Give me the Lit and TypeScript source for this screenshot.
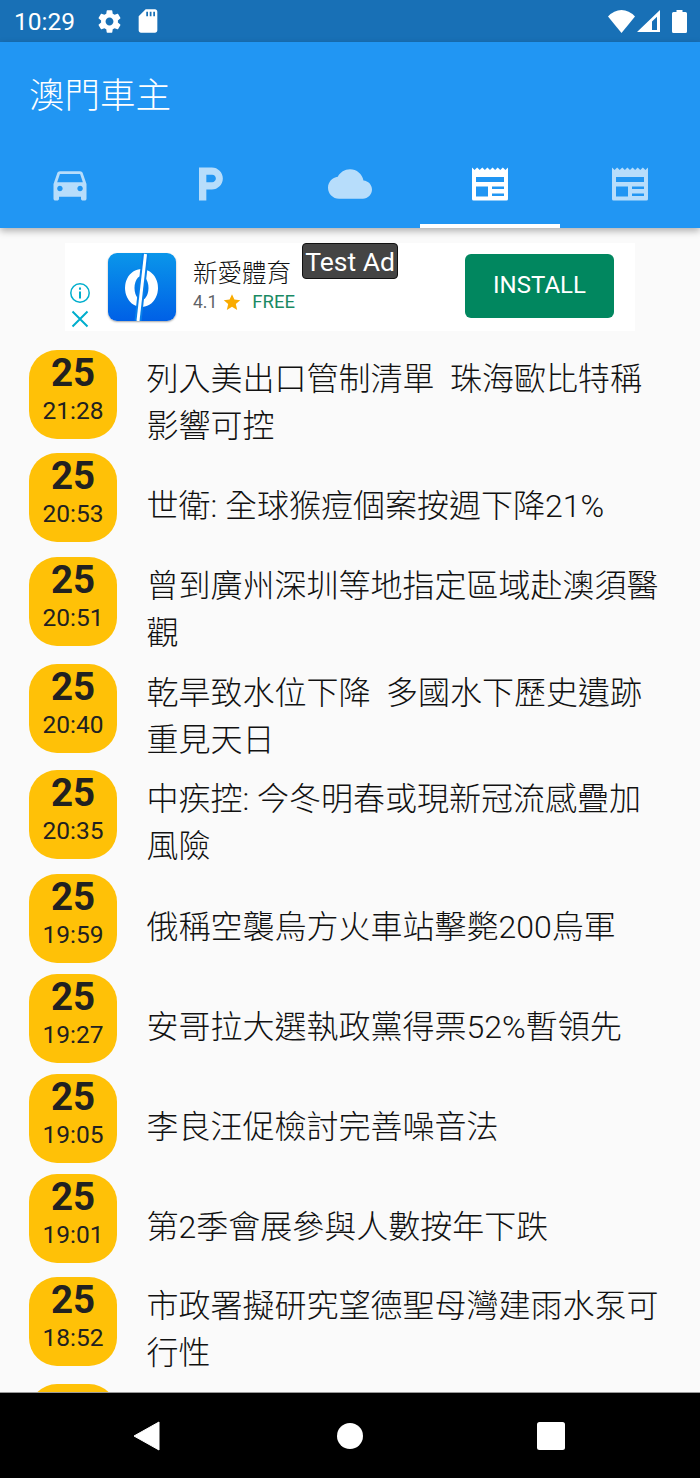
import { LitElement, html, css } from "lit";
import { customElement } from "lit/decorators.js";

const NEWS = "M4 5.500" + "l2.570 2.500 2.570-2.500".repeat(7) + "V37a1.500 1.500 0 0 1-1.500 1.500H5.500A1.500 1.500 0 0 1 4 37zM8 15v5h28v-5zM8 24.500v10h12v-10zM24 24.500V27h12v-2.500zM24 31.500V34h12v-2.500z";
const CAR = "M18.920 6.010C18.720 5.420 18.160 5 17.500 5h-11c-.66 0-1.210.42-1.420 1.010L3 12v8c0 .55.45 1 1 1h1c.55 0 1-.45 1-1v-1h12v1c0 .55.45 1 1 1h1c.55 0 1-.45 1-1v-8l-2.080-5.990zM6.500 16c-.83 0-1.500-.67-1.500-1.500S5.670 13 6.500 13s1.500.67 1.500 1.500S7.330 16 6.500 16zm11 0c-.83 0-1.500-.67-1.500-1.500s.67-1.500 1.500-1.500 1.500.67 1.500 1.500-.67 1.500-1.500 1.500zM5 11l1.500-4.500h11L19 11H5z";
const PARK = "M13 3H6v18h4v-6h3c3.310 0 6-2.690 6-6s-2.690-6-6-6zm.2 8H10V7h3.200c1.100 0 2 .9 2 2s-.9 2-2 2z";
const CLOUD = "M19.350 10.040C18.670 6.590 15.640 4 12 4 9.110 4 6.600 5.640 5.350 8.040 2.340 8.360 0 10.910 0 14c0 3.310 2.690 6 6 6h13c2.760 0 5-2.240 5-5 0-2.640-2.050-4.780-4.650-4.960z";

const tabs: [string, string][] = [[CAR, "0 0 24 24"], [PARK, "0 0 24 24"], [CLOUD, "0 0 24 24"], [NEWS, "0 0 44 44"], [NEWS, "0 0 44 44"]];
const rows: [string, string, number][] = [
  ["21:28", "列入美出口管制清單  珠海歐比特稱影響可控", 103],
  ["20:53", "世衛: 全球猴痘個案按週下降21%", 104],
  ["20:51", "曾到廣州深圳等地指定區域赴澳須醫觀", 107],
  ["20:40", "乾旱致水位下降  多國水下歷史遺跡重見天日", 106],
  ["20:35", "中疾控: 今冬明春或現新冠流感疊加風險", 104],
  ["19:59", "俄稱空襲烏方火車站擊斃200烏軍", 100],
  ["19:27", "安哥拉大選執政黨得票52%暫領先", 100],
  ["19:05", "李良汪促檢討完善噪音法", 100],
  ["19:01", "第2季會展參與人數按年下跌", 103],
  ["18:52", "市政署擬研究望德聖母灣建雨水泵可行性", 107],
  ["18:40", "", 100],
];

const icon = (d: string, cls = "", vb = "0 0 24 24") => html`<svg class=${cls} viewBox=${vb}><path d=${d} fill="currentColor" fill-rule="evenodd"></path></svg>`;

@customElement("app-root")
export class AppRoot extends LitElement {
  static styles = css`
    :host { display: block; width: 700px; height: 1478px; overflow: hidden; position: relative; background: #fafafa; font-family: Roboto, "Noto Sans CJK TC", sans-serif; color: #212121; }
    .status { height: 42px; background: #1870b6; color: #fff; display: flex; align-items: center; padding: 0 13px 0 14px; box-sizing: border-box; font: 24.500px Roboto, sans-serif; }
    .status .time { width: 82px; }
    .status svg { display: block; flex: none; }
    .gear { width: 27px; height: 27px; margin-right: 11px; }
    .sd { width: 28px; height: 28px; }
    .spacer { flex: 1; }
    .wifi { width: 27px; height: 23px; }
    .cell { width: 23px; height: 22px; margin-left: 2px; }
    .batt { width: 15px; height: 23px; margin-left: 12px; }
    .bar { height: 186px; background: #2196f3; box-shadow: 0 3px 7px rgba(0,0,0,.3); position: relative; z-index: 1; display: flex; flex-direction: column; }
    .title { height: 102px; padding: 32px 0 0 29px; box-sizing: border-box; color: #fff; font-size: 35.500px; line-height: 44px; font-weight: 300; }
    .tabs { display: flex; flex: 1; }
    .tab { width: 140px; display: flex; justify-content: center; padding-top: 17.500px; box-sizing: border-box; color: rgba(255,255,255,.68); position: relative; }
    .tab svg { width: 44px; height: 44px; }
    .tab.on { color: #fff; }
    .tab.on::after { content: ""; position: absolute; left: 0; right: 0; bottom: 0; height: 4px; background: #fff; }
    .ad { margin: 15px 65px 0; height: 88px; background: #fff; position: relative; display: flex; align-items: center; }
    .adside { width: 30px; padding-top: 37px; display: flex; flex-direction: column; align-items: center; gap: 4px; color: #00aecd; }
    .adside svg { width: 22px; height: 22px; display: block; }
    .logo { width: 68px; height: 68px; border-radius: 9px; margin: 0 0 0 13px; background: linear-gradient(#0a96ea, #0060e6); box-shadow: 0 1px 2px rgba(0,0,0,.35); flex: none; }
    .logo svg { display: block; width: 68px; height: 68px; }
    .adtext { margin-left: 17px; flex: 1; padding-bottom: 4px; }
    .adname { font-size: 24.500px; line-height: 36px; color: #111; font-weight: 300; }
    .admeta { font: 17.500px/24px Roboto, sans-serif; color: #5f6368; display: flex; align-items: center; margin-top: -2px; }
    .star { width: 18px; height: 18px; margin: 0 11px 0 6px; color: #f9ab00; }
    .free { color: #1a8a63; font-size: 18.500px; }
    .install { width: 149px; height: 64px; margin: 0 21px 3px 0; border-radius: 6px; background: #01875f; color: #fff; font: 24px/62px Roboto, sans-serif; text-align: center; }
    .testad { position: absolute; left: 237px; top: 0; width: 96px; height: 36px; box-sizing: border-box; border: 1px solid #111; border-radius: 4px; background: #444; color: #fff; font: 26.500px/35px Roboto, sans-serif; text-align: center; }
    .list { margin-top: 19px; padding-left: 29px; }
    .row { display: flex; align-items: flex-start; }
    .badge { width: 88px; height: 88.500px; border-radius: 28px; background: #ffc107; flex: none; text-align: center; font-family: Roboto, sans-serif; color: #212121; }
    .day { font-size: 38.500px; font-weight: 700; line-height: 44px; margin-top: 0.500px; }
    .hm { font-size: 24.500px; line-height: 32px; margin-top: 0.500px; }
    .text { margin-left: 29.500px; width: 520px; height: 88px; margin-top: 9px; font-size: 32px; line-height: 47px; white-space: pre-wrap; display: flex; align-items: center; color: #111; font-weight: 300; }
    .nav { position: absolute; left: 0; right: 0; bottom: 0; height: 86px; background: #000; border-top: 1px solid #999; box-sizing: border-box; display: flex; align-items: center; gap: 171px; padding-left: 130px; z-index: 2; }
    .nav svg { width: 32px; height: 32px; display: block; flex: none; }
  `;

  render() {
    return html`
      <div class="status">
        <span class="time">10:29</span>
        ${icon("M19.430 12.980c.04-.32.07-.64.07-.98s-.03-.66-.07-.98l2.110-1.650c.19-.15.24-.42.12-.64l-2-3.460c-.12-.22-.39-.3-.61-.22l-2.490 1c-.52-.4-1.080-.73-1.690-.98l-.38-2.650C14.460 2.180 14.250 2 14 2h-4c-.25 0-.46.18-.49.42l-.38 2.650c-.61.25-1.170.59-1.690.98l-2.490-1c-.23-.09-.49 0-.61.22l-2 3.460c-.13.22-.07.49.12.64l2.110 1.650c-.04.32-.07.65-.07.98s.03.66.07.98l-2.110 1.650c-.19.15-.24.42-.12.64l2 3.460c.12.22.39.3.61.22l2.490-1c.52.4 1.080.73 1.690.98l.38 2.650c.03.24.24.42.49.42h4c.25 0 .46-.18.49-.42l.38-2.650c.61-.25 1.170-.59 1.690-.98l2.490 1c.23.09.49 0 .61-.22l2-3.460c.12-.22.07-.49-.12-.64l-2.110-1.650zM12 15.500c-1.930 0-3.500-1.570-3.500-3.500s1.570-3.500 3.500-3.500 3.500 1.570 3.500 3.500-1.570 3.500-3.500 3.500z", "gear")}
        ${icon("M18 2h-8L4 8v12c0 1.100.9 2 2 2h12c1.100 0 2-.9 2-2V4c0-1.100-.9-2-2-2zm-6 6h-1.500V4H12v4zm3 0h-1.500V4H15v4zm3 0h-1.500V4H18v4z", "sd")}
        <span class="spacer"></span>
        <svg class="wifi" viewBox="0 0 27 23"><path d="M13.500 23 0 6.500Q6 0 13.500 0T27 6.500z" fill="currentColor"></path></svg>
        <svg class="cell" viewBox="0 0 23 22"><path d="M0 22 23 0v22zM15 11.500V20h5V6.700z" fill="currentColor" fill-rule="evenodd"></path></svg>
        <svg class="batt" viewBox="0 0 15 23"><path d="M4.500 0h6v2h3A1.500 1.500 0 0 1 15 3.500v18a1.500 1.500 0 0 1-1.500 1.500h-12A1.500 1.500 0 0 1 0 21.500v-18A1.500 1.500 0 0 1 1.500 2h3z" fill="currentColor"></path></svg>
      </div>
      <div class="bar">
        <div class="title">澳門車主</div>
        <div class="tabs">
          ${tabs.map(([d, vb], i) => html`<div class="tab ${i === 3 ? "on" : ""}">${icon(d, "", vb)}</div>`)}
        </div>
      </div>
      <div class="ad">
        <div class="adside">
          <svg viewBox="0 0 22 22"><circle cx="11" cy="11" r="9.200" fill="none" stroke="currentColor" stroke-width="1.500"></circle><path d="M10 5.500h2v2.300h-2zM10 9.500h2v7h-2z" fill="currentColor"></path></svg>
          <svg viewBox="0 0 22 22"><path d="M3.500 3.500l15 15M18.500 3.500l-15 15" fill="none" stroke="currentColor" stroke-width="2"></path></svg>
        </div>
        <div class="logo"><svg viewBox="0 0 68 68">
          <path d="M33.500 16a16.500 19 0 1 0 .01 0zM33.500 23a7 12 0 1 1-.01 0z" fill="#fff" fill-rule="evenodd"></path>
          <path d="M37.500 1 30 68" stroke="#0a80ea" stroke-width="7" fill="none"></path>
          <path d="M37.500 1 30 68" stroke="#fff" stroke-width="3" fill="none"></path>
        </svg></div>
        <div class="adtext">
          <div class="adname">新愛體育</div>
          <div class="admeta">4.1<svg class="star" viewBox="0 0 24 24"><path d="M12 1.500l3.200 7.300 7.800.7-5.900 5.200 1.800 7.800L12 18.300l-6.900 4.200 1.800-7.800L1 9.500l7.800-.7z" fill="currentColor"></path></svg><span class="free">FREE</span></div>
        </div>
        <div class="install">INSTALL</div>
        <div class="testad">Test Ad</div>
      </div>
      <div class="list">
        ${rows.map(([t, s, h]) => html`
          <div class="row" style="height:${h}px">
            <div class="badge"><div class="day">25</div><div class="hm">${t}</div></div>
            <div class="text"><span>${s}</span></div>
          </div>`)}
      </div>
      <div class="nav">
        <svg viewBox="0 0 32 32"><path d="M29 2v28L4 16z" fill="#fff" stroke="#fff" stroke-linejoin="round"></path></svg>
        <svg viewBox="0 0 32 32"><circle cx="17" cy="16" r="13" fill="#fff"></circle></svg>
        <svg viewBox="0 0 32 32"><rect x="1" y="2" width="28" height="28" rx="2.500" fill="#fff"></rect></svg>
      </div>
    `;
  }
}
